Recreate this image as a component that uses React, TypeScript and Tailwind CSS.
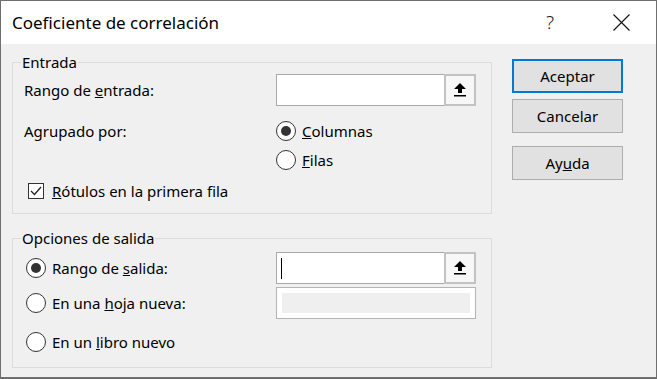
import { ReactNode } from 'react';

function UpArrow() {
  return (
    <svg width="12" height="14" viewBox="0 0 12 14">
      <polygon points="6,0 12,6 8,6 8,10 4,10 4,6 0,6" fill="#000" />
      <rect x="0" y="12" width="12" height="1.5" fill="#000" />
    </svg>
  );
}

function RangeInput({ cursor = false }: { cursor?: boolean }) {
  return (
    <div className="w-[200px] h-[32px] flex border border-[#a9a9a9] bg-white">
      <div className="flex-1 flex items-center pl-[4px]">
        {cursor && <div className="w-px h-[21px] bg-black" />}
      </div>
      <button className="w-[32px] -my-px -mr-px border-2 border-[#c2c2c2] bg-[#f7f7f7] flex items-center justify-center">
        <UpArrow />
      </button>
    </div>
  );
}

function Radio({ checked, children }: { checked?: boolean; children: ReactNode }) {
  return (
    <div className="h-[24px] flex items-center">
      <div className="w-[20px] h-[20px] rounded-full border border-[#333] bg-white flex items-center justify-center">
        {checked && <div className="w-[10px] h-[10px] rounded-full bg-[#333]" />}
      </div>
      <span className="ml-[6px]">{children}</span>
    </div>
  );
}

function Group({ title, className, children }: { title: string; className: string; children: ReactNode }) {
  return (
    <div className={`relative border border-[#dcdcdc] ${className}`}>
      <span className="absolute left-[8px] -top-[11px] px-[1px] leading-[20px] bg-[#f0f0f0]">{title}</span>
      {children}
    </div>
  );
}

export default function App() {
  return (
    <div className="w-[657px] h-[379px] bg-[#f0f0f0] border border-b-2 border-[#6f6f6f] flex flex-col text-[15px] text-black font-['Noto_Sans',sans-serif] overflow-hidden">
      {/* Title bar */}
      <div className="h-[43px] bg-white flex items-center pl-[11px] shrink-0">
        <span className="text-[17px]">Coeficiente de correlación</span>
        <span className="ml-auto text-[19px] font-light text-[#222] w-[20px] text-center">?</span>
        <svg className="ml-[53px] mr-[26px]" width="17" height="17" viewBox="0 0 17 17">
          <path d="M0.5 0.5 L16.5 16.5 M16.5 0.5 L0.5 16.5" stroke="#111" strokeWidth="1.1" />
        </svg>
      </div>

      <div className="flex pl-[11px] pt-[15px]">
        <div className="w-[480px] mt-[3px] flex flex-col gap-[24px]">
          <Group title="Entrada" className="h-[152px] pl-[11px] pt-[11px]">
            <div className="flex items-center h-[32px]">
              <span className="w-[252px]">Rango de <u>e</u>ntrada:</span>
              <RangeInput />
            </div>
            <div className="flex mt-[13px]">
              <span className="w-[252px] h-[24px] flex items-center">Agrupado por:</span>
              <div className="flex flex-col gap-[5px]">
                <Radio checked><u>C</u>olumnas</Radio>
                <Radio><u>F</u>ilas</Radio>
              </div>
            </div>
            <div className="h-[24px] mt-[7px] pl-[4px] flex items-center">
              <div className="w-[16px] h-[16px] border border-[#333] bg-white flex items-center justify-center">
                <svg width="12" height="10" viewBox="0 0 12 10">
                  <path d="M1 5 L4.5 8.5 L11 1" fill="none" stroke="#222" strokeWidth="1.3" />
                </svg>
              </div>
              <span className="ml-[8px]"><u>R</u>ótulos en la primera fila</span>
            </div>
          </Group>

          <Group title="Opciones de salida" className="h-[130px] pl-[13px] pt-[13px]">
            <div className="flex items-center h-[32px]">
              <div className="w-[250px]">
                <Radio checked>Rango de <u>s</u>alida:</Radio>
              </div>
              <RangeInput cursor />
            </div>
            <div className="flex items-center h-[32px] mt-[3px]">
              <div className="w-[250px]">
                <Radio>En una <u>h</u>oja nueva:</Radio>
              </div>
              <div className="w-[200px] h-[32px] border border-[#b4b4b4] bg-white p-[5px]">
                <div className="w-full h-full bg-[#efefef]" />
              </div>
            </div>
            <div className="mt-[11px]">
              <Radio>En un <u>l</u>ibro nuevo</Radio>
            </div>
          </Group>
        </div>

        <div className="ml-[20px] w-[111px] flex flex-col">
          <button className="h-[34px] border-2 border-[#0078d7] bg-[#e1e1e1]">Aceptar</button>
          <button className="h-[34px] mt-[6px] border border-[#adadad] bg-[#e1e1e1]">Cancelar</button>
          <button className="h-[34px] mt-[13px] border border-[#adadad] bg-[#e1e1e1]">Ay<u>u</u>da</button>
        </div>
      </div>
    </div>
  );
}
